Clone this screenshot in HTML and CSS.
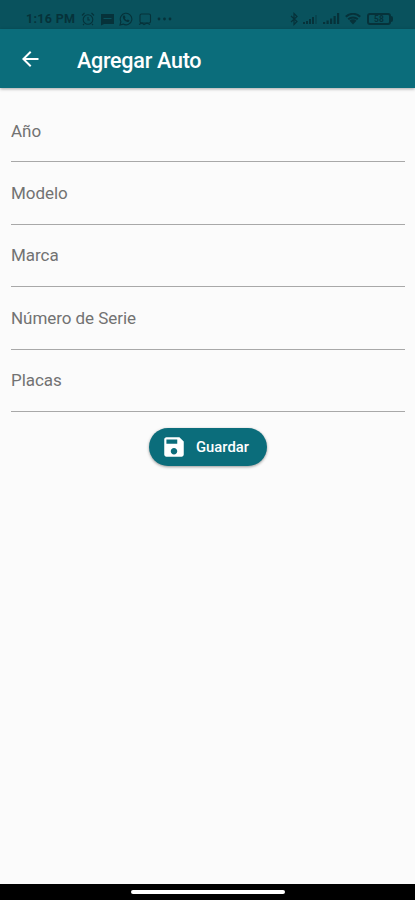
FILE: index.html
```html
<!DOCTYPE html>
<html lang="es">
<head>
    <meta charset="UTF-8">
    <meta name="viewport" content="width=device-width, initial-scale=1.0">
    <title>Agregar Auto</title>
    <link rel="stylesheet" href="styles.css">
</head>
<body>
    <div class="statusbar">
        <span class="time">1:16 PM</span>
        <div class="notifications">
            <svg width="14" height="14" viewBox="0 0 14 14" fill="none" stroke="currentColor" stroke-width="1.1">
                <circle cx="7" cy="7.5" r="4.8"/>
                <path d="M1 3.5 3.5 1M13 3.5 10.5 1M7 5v3h2M3 12l-1 1M11 12l1 1"/>
            </svg>
            <svg width="14" height="14" viewBox="0 0 14 14">
                <path fill="currentColor" fill-rule="evenodd" d="M1 2h13v10H4l-3 1.500zM3.500 6v1h8V6z"/>
            </svg>
            <svg width="14" height="14" viewBox="0 0 14 14">
                <path fill="none" stroke="currentColor" stroke-width="1.1" d="M1 13l.9-3.300A5.800 5.800 0 1 1 4.200 12.100z"/>
                <path fill="currentColor" d="M4.500 3.600l1.200-.1.800 1.900-.7.900c.5.900 1.100 1.500 2 1.900l.9-.8 1.800.9c0 1.300-1 1.900-2.100 1.700C6 9.500 4 7.500 3.800 5.300c0-.7.300-1.300.7-1.700z"/>
            </svg>
            <svg width="14" height="14" viewBox="0 0 14 14" fill="none" stroke="currentColor" stroke-width="1.1">
                <rect x="2" y="2" width="10.500" height="9" rx="1.500"/>
                <path d="M1 12.500l3-1.500 2 1.500 3-1.500 3 1.500"/>
            </svg>
            <svg width="15" height="14" viewBox="0 0 15 14" fill="currentColor">
                <circle cx="2" cy="7" r="1.400"/>
                <circle cx="7.500" cy="7" r="1.400"/>
                <circle cx="13" cy="7" r="1.400"/>
            </svg>
        </div>
        <div class="system">
            <svg width="8" height="14" viewBox="0 0 8 14" fill="none" stroke="currentColor" stroke-width="1.200">
                <path d="M1 4l6 5.500L4 12.500v-11l3 3L1 10"/>
            </svg>
            <svg width="15" height="12" viewBox="0 0 15 12" fill="currentColor">
                <path d="M0 9h2v2H0zM3 8h2v3H3zM6 6h2v5H6zM9 4h2v7H9z"/>
                <path opacity=".35" d="M12 2h2v9h-2z"/>
            </svg>
            <svg width="17" height="12" viewBox="0 0 17 12" fill="currentColor">
                <path d="M0 9h2.200v2H0zM3.500 7.500h2.200V11H3.500zM7 5.500h2.200V11H7zM10.500 3h2.200v8h-2.200zM14 0h2.200v11H14z"/>
            </svg>
            <svg width="16" height="12" viewBox="0 0 16 12" fill="none" stroke="currentColor" stroke-width="2">
                <path d="M.8 3.700a10.500 10.500 0 0 1 14.400 0M3.200 6.300a7 7 0 0 1 9.600 0"/>
                <path fill="currentColor" stroke="none" d="M4.500 7.700a5 5 0 0 1 7 0L8 11.500z"/>
            </svg>
            <div class="battery">
                <span class="level">58</span>
                <span class="tip"></span>
            </div>
        </div>
    </div>

    <header class="appbar">
        <svg width="24" height="24" viewBox="0 0 24 24" fill="#fff">
            <path d="M20.500 11H7.830l5.590-5.590L12 4l-8 8 8 8 1.410-1.410L7.830 13H20.500v-2z"/>
        </svg>
        <h1>Agregar Auto</h1>
    </header>

    <form class="form">
        <input type="text" placeholder="Año" aria-label="Año">
        <input type="text" placeholder="Modelo" aria-label="Modelo">
        <input type="text" placeholder="Marca" aria-label="Marca">
        <input type="text" placeholder="Número de Serie" aria-label="Número de Serie">
        <input type="text" placeholder="Placas" aria-label="Placas">
        <button type="button" class="save">
            <svg width="26" height="26" viewBox="0 0 24 24" fill="#fff">
                <path d="M17 3H5c-1.110 0-2 .9-2 2v14c0 1.100.89 2 2 2h14c1.100 0 2-.9 2-2V7l-4-4zm-5 16c-1.660 0-3-1.340-3-3s1.340-3 3-3 3 1.340 3 3-1.340 3-3 3zm3-10H5V5h10v4z"/>
            </svg>
            <span>Guardar</span>
        </button>
    </form>

    <div class="navbar"><div class="handle"></div></div>
</body>
</html>
```
FILE: styles.css
```css
* {
    box-sizing: border-box;
}
body {
    margin: 0;
    height: 900px;
    display: flex;
    flex-direction: column;
    background-color: #fbfbfb;
    font-family: Roboto, sans-serif;
    overflow: hidden;
}
svg {
    display: block;
    flex: none;
}
.statusbar {
    height: 29px;
    padding: 8px 22px 0 26px;
    display: flex;
    align-items: center;
    background-color: #09525d;
    color: #06323a;
}
.time {
    width: 55px;
    font-size: 12.5px;
    font-weight: 700;
    letter-spacing: 0.3px;
    white-space: nowrap;
}
.notifications {
    display: flex;
    gap: 5px;
}
.system {
    margin-left: auto;
    display: flex;
    align-items: center;
    gap: 5px;
}
.battery {
    display: flex;
    align-items: center;
    margin-left: 1px;
}
.level {
    width: 24px;
    height: 12px;
    border: 2px solid currentColor;
    border-radius: 3px;
    font-size: 8.5px;
    line-height: 9px;
    font-weight: 700;
    text-align: center;
}
.tip {
    width: 2px;
    height: 6px;
    border-radius: 0 2px 2px 0;
    background-color: currentColor;
}
.appbar {
    height: 59px;
    padding: 1px 18px 0;
    display: flex;
    align-items: center;
    gap: 35px;
    background-color: #0b6d7b;
    box-shadow: 0 1px 3px rgba(0, 0, 0, 0.35);
}
.appbar h1 {
    margin: 2px 0 0;
    color: #fff;
    font-size: 21.5px;
    font-weight: 500;
    letter-spacing: -0.25px;
}
.form {
    flex: 1;
    padding: 12px 10px 0 11px;
    display: flex;
    flex-direction: column;
}
.form input {
    width: 100%;
    height: 62.4px;
    padding: 0;
    border: none;
    border-bottom: 1px solid #a8a8a8;
    background: none;
    color: #222;
    font-family: inherit;
    font-size: 17px;
    letter-spacing: -0.05px;
    outline: none;
}
.form input::placeholder {
    color: #727272;
    opacity: 1;
}
.save {
    align-self: center;
    width: 118px;
    height: 38px;
    margin-top: 16px;
    padding: 0 0 0 12px;
    display: flex;
    align-items: center;
    gap: 9px;
    border: none;
    border-radius: 19px;
    background-color: #0b6d7b;
    box-shadow: 0 1px 3px rgba(0, 0, 0, 0.4);
    color: #fff;
    font-family: inherit;
    font-size: 14.8px;
    font-weight: 500;
}
.save span {
    padding-top: 1px;
}
.navbar {
    height: 16px;
    padding-top: 6px;
    background-color: #000;
}
.handle {
    width: 154px;
    height: 4px;
    margin: 0 auto;
    border-radius: 2px;
    background-color: #fff;
}
```
